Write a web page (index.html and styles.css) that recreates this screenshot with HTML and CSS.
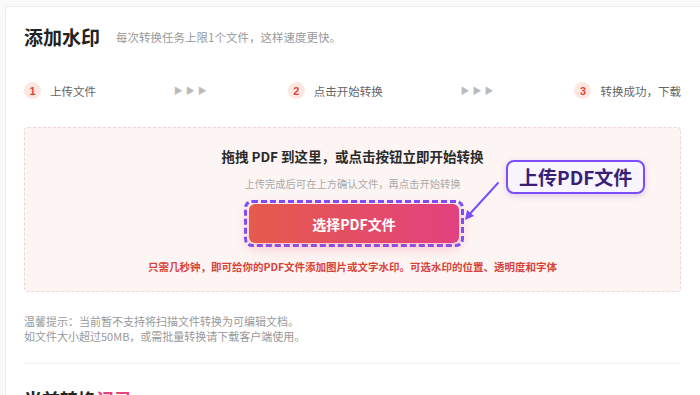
FILE: index.html
```html
<!DOCTYPE html>
<html lang="zh-CN">
<head>
  <meta charset="UTF-8" />
  <meta name="viewport" content="width=device-width, initial-scale=1" />
  <title>添加水印</title>
  <link rel="stylesheet" href="styles.css">
</head>
<body>
  <div class="card">
    <div class="head">
      <h1>添加水印</h1>
      <span class="sub">每次转换任务上限1个文件，这样速度更快。</span>
    </div>

    <div class="steps">
      <div class="step"><span class="num">1</span>上传文件</div>
      <div class="arrows">▶▶▶</div>
      <div class="step"><span class="num">2</span>点击开始转换</div>
      <div class="arrows">▶▶▶</div>
      <div class="step"><span class="num">3</span>转换成功，下载</div>
    </div>

    <div class="dropzone">
      <h2>拖拽 PDF 到这里，或点击按钮立即开始转换</h2>
      <p class="hint">上传完成后可在上方确认文件，再点击开始转换</p>
      <div class="btn-wrap">
        <button class="pick-btn">选择PDF文件</button>
      </div>
      <p class="desc">只需几秒钟，即可给你的PDF文件添加图片或文字水印。可选水印的位置、透明度和字体</p>

      <!-- annotation -->
      <div class="callout">上传PDF文件</div>
      <svg class="pointer" width="40" height="42" viewBox="0 0 40 42">
        <path d="M36 3 L5 37" stroke="#7b4dff" stroke-width="2" fill="none" stroke-linecap="round"/>
        <path d="M3 40 L5 30 L12 36 Z" fill="#7b4dff"/>
      </svg>
    </div>

    <div class="tips">
      <p>温馨提示：当前暂不支持将扫描文件转换为可编辑文档。</p>
      <p>如文件大小超过50MB，或需批量转换请下载客户端使用。</p>
    </div>

    <div class="divider"></div>

    <h3 class="records">当前转换<span>记录</span></h3>
  </div>
</body>
</html>
```

FILE: styles.css
```css
body {
  margin: 0;
  background: #fafafa;
  font-family: "Noto Sans CJK SC", "Noto Sans", sans-serif;
  color: #333;
  overflow: hidden;
}

.card {
  margin: 6px 0 0 5px;
  background: #fff;
  border: 1px solid #eeeeee;
  border-right: none;
  border-radius: 4px 0 0 0;
  padding: 18px 19px 0 18px;
  height: 600px;
}

.head {
  display: flex;
  align-items: center;
  gap: 16px;
  height: 24px;
}

h1 {
  margin: 0;
  font-size: 19px;
  font-weight: 700;
  color: #222;
  line-height: 24px;
}

.sub {
  font-size: 11.5px;
  color: #999;
}

/* steps */
.steps {
  display: flex;
  justify-content: space-between;
  align-items: center;
  margin-top: 33px;
  height: 17px;
  font-size: 11.5px;
  color: #666;
}

.step {
  display: flex;
  align-items: center;
  gap: 9px;
}

.num {
  width: 17px;
  height: 17px;
  border-radius: 50%;
  background: #fde7e2;
  color: #e0463c;
  font-size: 11px;
  font-weight: 700;
  display: flex;
  align-items: center;
  justify-content: center;
  font-family: "Liberation Sans", sans-serif;
}

.arrows {
  color: #bbb;
  font-size: 9px;
  letter-spacing: 3px;
}

/* drop area */
.dropzone {
  position: relative;
  margin-top: 28px;
  height: 165px;
  box-sizing: border-box;
  border: 1px dashed #ead9d7;
  border-radius: 4px;
  background: #fdf5f4;
  padding-top: 18px;
  display: flex;
  flex-direction: column;
  align-items: center;
}

h2 {
  margin: 0;
  font-size: 13.5px;
  line-height: 20px;
  font-weight: 700;
  color: #2a2a2a;
}

.hint {
  margin: 10px 0 0;
  font-size: 10.3px;
  line-height: 16px;
  color: #aaa;
}

.btn-wrap {
  margin-top: 8px;
  margin-left: 3px;
  border: 3px dashed #7b4dff;
  border-radius: 8px;
  padding: 1px 2px;
}

.pick-btn {
  display: block;
  width: 210px;
  height: 39px;
  border: none;
  border-radius: 6px;
  background: linear-gradient(90deg, #e55b4b, #e2417f);
  color: #fff;
  font-family: inherit;
  font-size: 14px;
  font-weight: 700;
  box-shadow: 0 4px 14px rgba(232, 80, 100, 0.35);
  cursor: pointer;
}

.desc {
  margin: 12px 0 0;
  font-size: 10.5px;
  line-height: 16px;
  font-weight: 700;
  color: #d8443a;
}

.callout {
  position: absolute;
  left: 481px;
  top: 32px;
  padding: 0 11px;
  height: 30px;
  line-height: 30px;
  border: 2px solid #7b4dff;
  border-radius: 8px;
  background: #f8f5ff;
  color: #3a1f78;
  font-size: 19px;
  font-weight: 700;
  box-shadow: 0 2px 6px rgba(80, 40, 160, 0.2);
}

.pointer {
  position: absolute;
  left: 437px;
  top: 52px;
}

/* tips */
.tips {
  margin-top: 22px;
  font-size: 11px;
  line-height: 15px;
  color: #999;
}

.tips p {
  margin: 0;
}

.divider {
  margin-top: 19px;
  height: 1px;
  background: #f0f0f0;
}

.records {
  margin: 22px 0 0;
  font-size: 18px;
  font-weight: 700;
  color: #222;
}

.records span {
  color: #e8457a;
}
```
